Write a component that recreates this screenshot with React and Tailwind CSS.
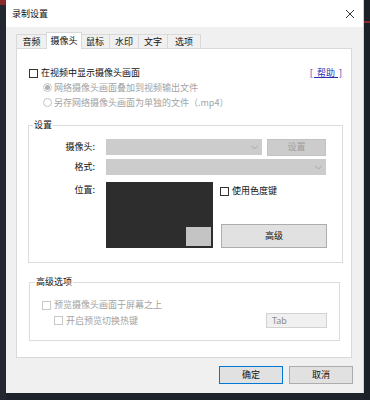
import React from "react";

function Check({ disabled }) {
  return (
    <span
      className={
        "inline-block w-[9px] h-[9px] border bg-white shrink-0 " +
        (disabled ? "border-[#c8c8c8]" : "border-[#333333]")
      }
    />
  );
}

function Radio({ checked }) {
  return (
    <span className="w-[9px] h-[9px] rounded-full border border-[#c4c4c4] bg-white flex items-center justify-center shrink-0">
      {checked ? <span className="w-[5px] h-[5px] rounded-full bg-[#b0b0b0]" /> : null}
    </span>
  );
}

function Chevron() {
  return (
    <svg width="7" height="5" viewBox="0 0 7 5" className="shrink-0">
      <path d="M0.5 1 L3.5 4 L6.5 1" fill="none" stroke="#a6a6a6" strokeWidth="1" />
    </svg>
  );
}

export default function App() {
  const tabs = [
    { t: "音频", w: "w-[31px]" },
    { t: "摄像头", w: "w-[36px]", sel: true },
    { t: "鼠标", w: "w-[30px]" },
    { t: "水印", w: "w-[30px]" },
    { t: "文字", w: "w-[30px]" },
    { t: "选项", w: "w-[34px]" },
  ];
  return (
    <div className="relative w-[370px] h-[400px] bg-[#1e232b] flex overflow-hidden font-['Noto_Sans_CJK_SC','Noto_Sans',sans-serif] text-[9px] leading-[14px] text-[#111]">
      <div className="w-[6px] h-full bg-[#232830] flex flex-col">
        <div className="h-[5px] bg-[#8a2a2a]" />
      </div>
      <div className="w-[358px] h-[393px] bg-[#f0f0f0] flex flex-col border-r border-[#d0d0d0]">
        {/* title bar */}
        <div className="h-[27px] bg-white flex items-center justify-between pl-[6px] pr-[8px]">
          <span className="text-[9px]">录制设置</span>
          <svg width="10" height="10" viewBox="0 0 10 10">
            <path d="M1 1 L9 9 M9 1 L1 9" stroke="#333" strokeWidth="1" />
          </svg>
        </div>
        {/* tabs */}
        <div className="pt-[5px] pl-[10px] flex items-end h-[21px]">
          {tabs.map((tb) => (
            <div
              key={tb.t}
              className={
                tb.w +
                " flex items-center justify-center border-t border-l border-r " +
                (tb.sel
                  ? "h-[17px] bg-white border-[#d9d9d9] relative z-10 -mb-px -mx-px"
                  : "h-[14px] bg-[#f0f0f0] border-[#d9d9d9] -ml-px first:ml-0")
              }
            >
              {tb.t}
            </div>
          ))}
        </div>
        {/* panel */}
        <div className="ml-[10px] w-[336px] h-[310px] border border-[#d9d9d9] bg-white flex flex-col">
          <div className="mt-[17px] h-[14px] flex items-center justify-between pl-[12px] pr-[9px]">
            <div className="flex items-center gap-[3px]">
              <Check />
              <span>在视频中显示摄像头画面</span>
            </div>
            <span className="text-[#2b2bb0] underline whitespace-pre">{"[  帮助  ]"}</span>
          </div>
          <div className="h-[15px] flex items-center pl-[26px] gap-[2px] text-[#a3a3a3]">
            <Radio checked />
            <span>网络摄像头画面叠加到视频输出文件</span>
          </div>
          <div className="h-[15px] flex items-center pl-[26px] gap-[2px] text-[#a3a3a3]">
            <Radio />
            <span>另存网络摄像头画面为单独的文件（.mp4）</span>
          </div>
          {/* group settings */}
          <div className="mt-[15px] ml-[11px] w-[315px] h-[138px] border border-[#dcdcdc] relative flex flex-col">
            <span className="absolute -top-[8px] left-[4px] px-[1px] bg-white">设置</span>
            <div className="mt-[13px] flex items-center h-[16px]">
              <span className="w-[66px] text-right">摄像头:</span>
              <div className="ml-[11px] w-[156px] h-[16px] bg-[#cccccc] flex items-center justify-end pr-[4px]">
                <Chevron />
              </div>
              <div className="ml-[5px] w-[59px] h-[17px] bg-[#cccccc] border border-[#c2c2c2] flex items-center justify-center text-[#a0a0a0]">
                设置
              </div>
            </div>
            <div className="mt-[4px] flex items-center h-[16px]">
              <span className="w-[66px] text-right">格式:</span>
              <div className="ml-[11px] w-[220px] h-[16px] bg-[#cccccc] flex items-center justify-end pr-[4px]">
                <Chevron />
              </div>
            </div>
            <div className="mt-[7px] flex items-start">
              <span className="w-[66px] text-right mt-[1px]">位置:</span>
              <div className="ml-[11px] w-[107px] h-[66px] bg-[#2d2d2d] flex items-end justify-end p-[2px]">
                <div className="w-[25px] h-[19px] bg-[#c4c4c4]" />
              </div>
              <div className="ml-[7px] flex flex-col">
                <div className="mt-[2px] h-[14px] flex items-center gap-[3px]">
                  <Check />
                  <span>使用色度键</span>
                </div>
                <div className="mt-[26px] ml-[1px] w-[106px] h-[24px] bg-[#e1e1e1] border border-[#adadad] flex items-center justify-center">
                  高级
                </div>
              </div>
            </div>
          </div>
          {/* group advanced */}
          <div className="mt-[19px] ml-[12px] w-[311px] h-[59px] border border-[#dcdcdc] relative flex flex-col">
            <span className="absolute -top-[8px] left-[5px] px-[1px] bg-white">高级选项</span>
            <div className="mt-[15px] h-[14px] flex items-center pl-[12px] gap-[3px] text-[#a3a3a3]">
              <Check disabled />
              <span>预览摄像头画面于屏幕之上</span>
            </div>
            <div className="mt-[1px] flex items-center justify-between pr-[12px]">
              <div className="h-[14px] flex items-center pl-[24px] gap-[3px] text-[#a3a3a3]">
                <Check disabled />
                <span>开启预览切换热键</span>
              </div>
              <div className="w-[61px] h-[15px] bg-[#f0f0f0] border border-[#d2d2d2] flex items-center pl-[5px] text-[#8c8c8c] font-['Noto_Sans',sans-serif]">
                Tab
              </div>
            </div>
          </div>
        </div>
        {/* buttons */}
        <div className="mt-[8px] flex justify-end gap-[6px] pr-[10px]">
          <div className="w-[64px] h-[18px] bg-[#e1e1e1] border border-[#0078d7] flex items-center justify-center">
            确定
          </div>
          <div className="w-[64px] h-[18px] bg-[#e1e1e1] border border-[#adadad] flex items-center justify-center">
            取消
          </div>
        </div>
      </div>
      <div className="flex-1 h-full bg-[#1c2027] flex flex-col">
        <div className="mt-[21px] h-[2px] bg-[#8a2a2a]" />
      </div>
    </div>
  );
}
